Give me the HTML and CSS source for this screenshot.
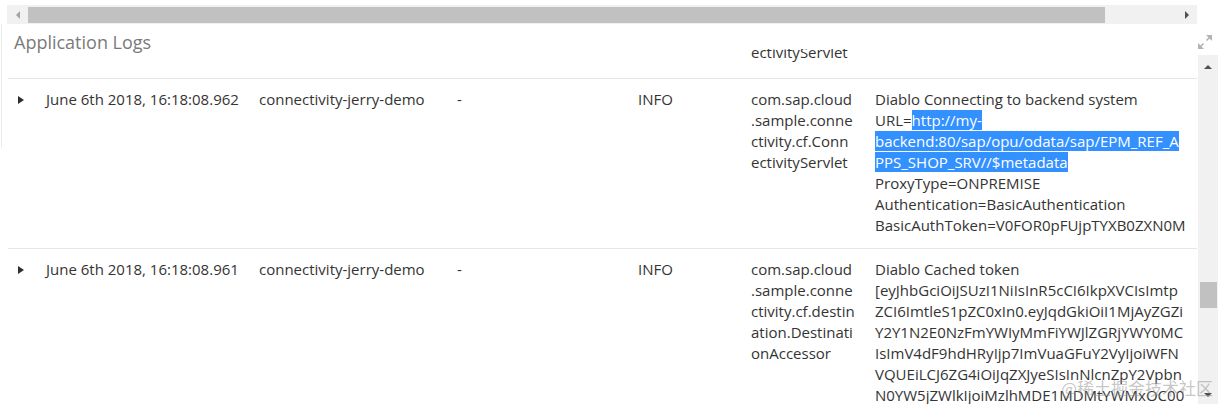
FILE: index.html
```html
<!DOCTYPE html>
<html lang="en">
<head>
<meta charset="utf-8">
<title>Application Logs</title>
<link rel="stylesheet" href="styles.css">
</head>
<body>
<div class="page">
  <div class="hscroll">
    <span class="hs-btn"><span class="arrow-left"></span></span>
    <span class="hs-thumb"></span>
    <span class="hs-track"></span>
    <span class="hs-btn"><span class="arrow-right"></span></span>
  </div>
  <div class="header">
    <h2 class="title">Application Logs</h2>
    <svg class="expand" width="14" height="14" viewBox="0 0 14 14">
      <polygon points="8,0 14,0 14,6" fill="#b3b3b3"/>
      <line x1="12.5" y1="1.5" x2="8.5" y2="5.5" stroke="#b3b3b3" stroke-width="1.6"/>
      <polygon points="0,8 0,14 6,14" fill="#b3b3b3"/>
      <line x1="1.5" y1="12.5" x2="5.5" y2="8.5" stroke="#b3b3b3" stroke-width="1.6"/>
    </svg>
  </div>
  <div class="main">
    <div class="viewport">
      <div class="rows">
        <div class="row row-prev">
          <div class="cell caret-cell"><svg class="caret" width="6" height="8" viewBox="0 0 6 8"><path d="M0 0L6 4L0 8Z"/></svg></div>
          <div class="cell">June 6th 2018, 16:18:08.963</div>
          <div class="cell">connectivity-jerry-demo</div>
          <div class="cell">-</div>
          <div class="cell">INFO</div>
          <div class="cell logger">com.sap.cloud.sample.connectivity.cf.ConnectivityServlet</div>
          <div class="cell msg">Diablo Calling backend system</div>
        </div>
        <div class="row">
          <div class="cell caret-cell"><svg class="caret" width="6" height="8" viewBox="0 0 6 8"><path d="M0 0L6 4L0 8Z"/></svg></div>
          <div class="cell">June 6th 2018, 16:18:08.962</div>
          <div class="cell">connectivity-jerry-demo</div>
          <div class="cell">-</div>
          <div class="cell">INFO</div>
          <div class="cell logger">com.sap.cloud.sample.connectivity.cf.ConnectivityServlet</div>
          <div class="cell msg">Diablo Connecting to backend system URL=<span class="sel">http://my-backend:80/sap/opu/odata/sap/EPM_REF_APPS_SHOP_SRV//$metadata</span> ProxyType=ONPREMISE Authentication=BasicAuthentication BasicAuthToken=V0FOR0pFUjpTYXB0ZXN0M</div>
        </div>
        <div class="row">
          <div class="cell caret-cell"><svg class="caret" width="6" height="8" viewBox="0 0 6 8"><path d="M0 0L6 4L0 8Z"/></svg></div>
          <div class="cell">June 6th 2018, 16:18:08.961</div>
          <div class="cell">connectivity-jerry-demo</div>
          <div class="cell">-</div>
          <div class="cell">INFO</div>
          <div class="cell logger">com.sap.cloud.sample.connectivity.cf.destination.DestinationAccessor</div>
          <div class="cell msg">Diablo Cached token [eyJhbGciOiJSUzI1NiIsInR5cCI6IkpXVCIsImtpZCI6ImtleS1pZC0xIn0.eyJqdGkiOiI1MjAyZGZiY2Y1N2E0NzFmYWIyMmFiYWJlZGRjYWY0MCIsImV4dF9hdHRyIjp7ImVuaGFuY2VyIjoiWFNVQUEiLCJ6ZG4iOiJqZXJyeSIsInNlcnZpY2VpbnN0YW5jZWlkIjoiMzlhMDE1MDMtYWMxOC00YjM2LWE1ZjUtZjE2ZDc5NmE0YjUxIn0sInN1YiI6IjEyMzQ1Njc4OTAiLCJzY29wZSI6WyJ1YWEudXNlciJdfQ]</div>
        </div>
      </div>
    </div>
    <div class="vscroll">
      <span class="vs-btn vs-up"><span class="arrow-up"></span></span>
      <span class="vs-gap"></span>
      <span class="vs-thumb"></span>
      <span class="vs-track"></span>
      <span class="vs-btn vs-down"><span class="arrow-down"></span></span>
    </div>
  </div>
  <div class="watermark">@稀土掘金技术社区</div>
</div>
</body>
</html>
```

FILE: styles.css
```css
html, body {
  margin: 0;
  padding: 0;
  background: #ffffff;
}

body {
  font-family: "Open Sans", "Noto Sans", sans-serif;
  width: 1218px;
  height: 404px;
  overflow: hidden;
}

.page {
  position: relative;
  height: 404px;
  overflow: hidden;
}

.page::before {
  content: "";
  position: absolute;
  left: 1px;
  top: 24px;
  width: 1px;
  height: 124px;
  background: #ececec;
  border-bottom-left-radius: 2px;
}

/* horizontal scrollbar */
.hscroll {
  display: flex;
  align-items: center;
  height: 19px;
  margin: 5px 21px 0 7px;
  background: #f1f1f1;
}

.hs-btn {
  flex: none;
  width: 21px;
  height: 19px;
  display: flex;
  align-items: center;
  justify-content: center;
}

.hs-thumb {
  flex: none;
  width: 1077px;
  height: 16px;
  background: #c1c1c1;
}

.hs-track {
  flex: 1;
}

.arrow-left {
  width: 0;
  height: 0;
  border-top: 4px solid transparent;
  border-bottom: 4px solid transparent;
  border-right: 4px solid #a3a3a3;
}

.arrow-right {
  width: 0;
  height: 0;
  border-top: 4px solid transparent;
  border-bottom: 4px solid transparent;
  border-left: 4px solid #505050;
}

/* header */
.header {
  display: flex;
  justify-content: space-between;
  align-items: flex-start;
  height: 25px;
  padding: 0 6px 0 14px;
  box-sizing: border-box;
}

.title {
  margin: 6px 0 0;
  font-size: 18px;
  font-weight: 400;
  line-height: 25px;
  color: #7a7a7a;
  white-space: nowrap;
}

.expand {
  flex: none;
  margin-top: 11px;
}

/* table area */
.main {
  display: flex;
  height: 355px;
}

.viewport {
  flex: none;
  width: 1198px;
  overflow: hidden;
}

.rows {
  margin-top: -80px;
}

.row {
  display: grid;
  grid-template-columns: 38px 213px 198px 181px 113px 124px 322px;
  width: 1189px;
  margin-left: 8px;
  padding: 10px 0 12px;
  border-bottom: 1px solid #e6e6e6;
  font-size: 15px;
  line-height: 21px;
  color: #343434;
}

.row-prev {
  padding-bottom: 15px;
}

.cell {
  min-width: 0;
}

.caret-cell {
  display: flex;
  align-items: center;
  height: 21px;
  padding-left: 10px;
}

.caret {
  fill: #2f2f2f;
}

.logger {
  padding-right: 20px;
  overflow-wrap: anywhere;
}

.msg {
  padding-right: 11px;
  overflow-wrap: anywhere;
}

.sel {
  background: #3390ff;
  color: #ffffff;
}

/* vertical scrollbar */
.vscroll {
  flex: none;
  width: 20px;
  margin-top: 6px;
  background: #f1f1f1;
  display: flex;
  flex-direction: column;
  align-items: center;
}

.vs-btn {
  flex: none;
  width: 20px;
  display: flex;
  align-items: center;
  justify-content: center;
}

.vs-up {
  height: 24px;
}

.vs-down {
  height: 19px;
}

.vs-gap {
  flex: none;
  height: 203px;
}

.vs-thumb {
  flex: none;
  width: 17px;
  height: 26px;
  background: #c1c1c1;
}

.vs-track {
  flex: 1;
}

.arrow-up {
  width: 0;
  height: 0;
  border-left: 4px solid transparent;
  border-right: 4px solid transparent;
  border-bottom: 4px solid #505050;
}

.arrow-down {
  width: 0;
  height: 0;
  border-left: 4px solid transparent;
  border-right: 4px solid transparent;
  border-top: 4px solid #505050;
}

.watermark {
  position: absolute;
  right: 5px;
  bottom: 6px;
  font-family: "Noto Sans CJK SC", "Noto Sans", sans-serif;
  font-size: 17px;
  line-height: 20px;
  color: rgba(150, 150, 150, 0.55);
  white-space: nowrap;
}
```
